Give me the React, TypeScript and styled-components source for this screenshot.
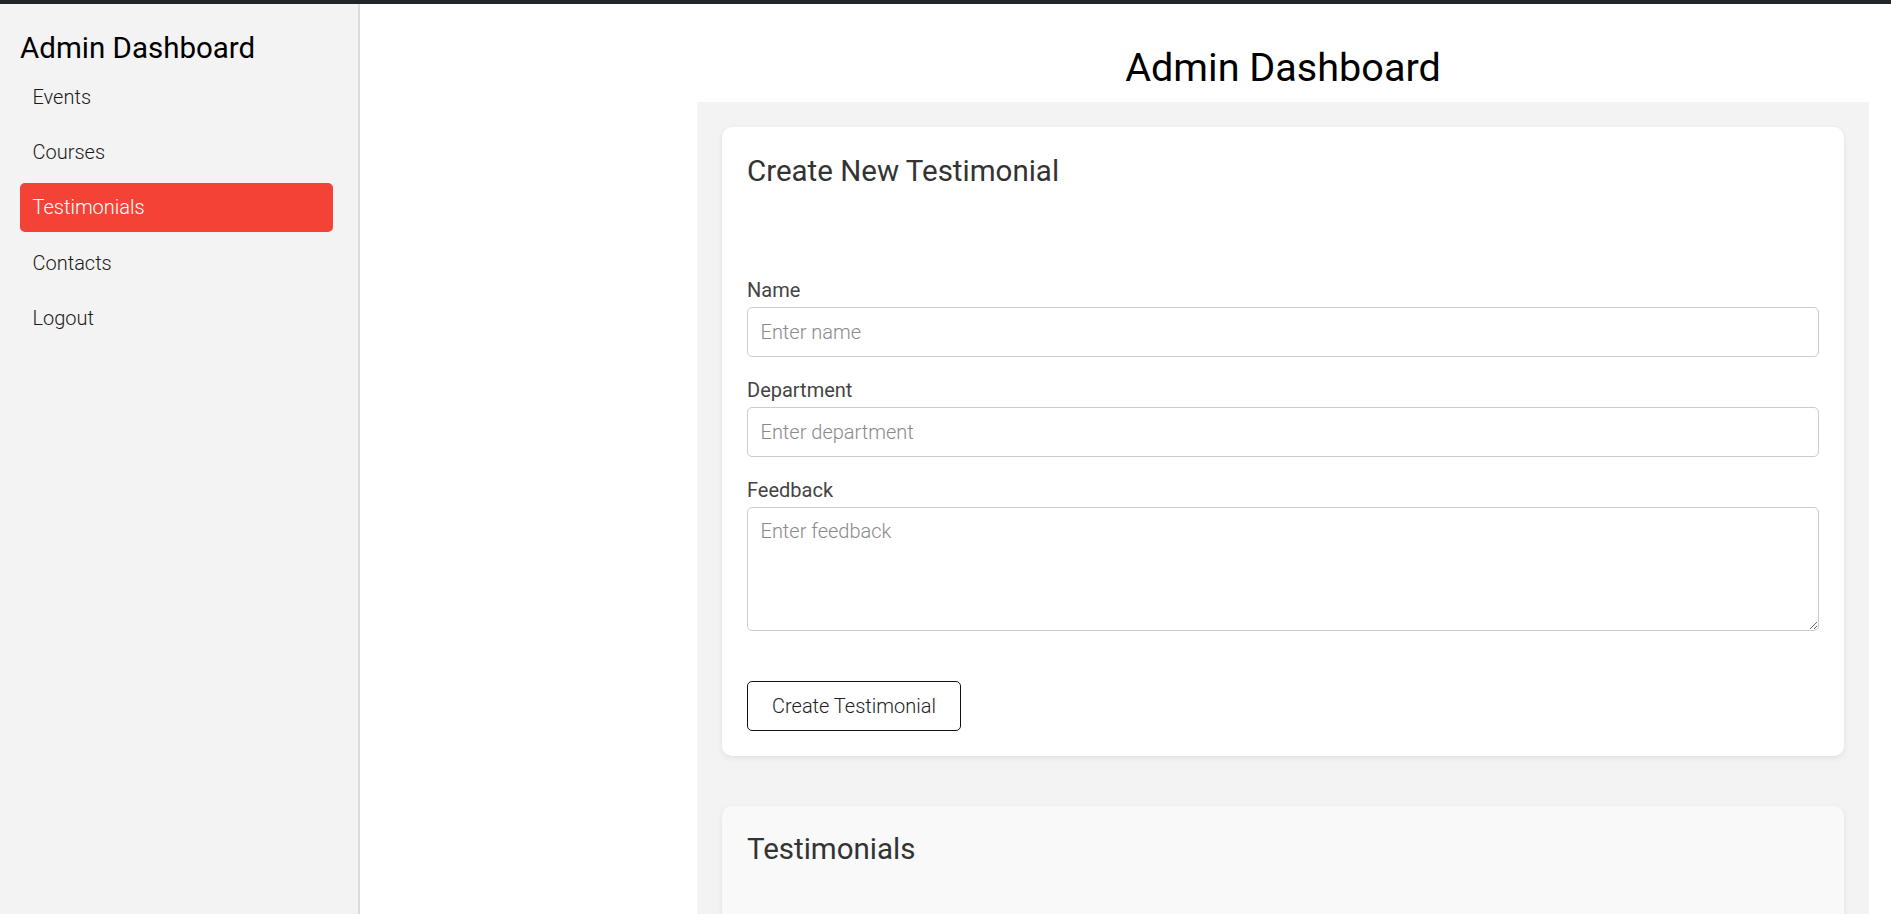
import React from "react";
import styled, { createGlobalStyle } from "styled-components";

const GlobalStyle = createGlobalStyle`
  html, body {
    margin: 0;
    padding: 0;
    overflow: hidden;
    background: #ffffff;
    font-family: Roboto, "Liberation Sans", Arial, sans-serif;
  }
  * { box-sizing: border-box; }
`;

const TopBar = styled.div`
  height: 4px;
  background: #212529;
`;

const Layout = styled.div`
  display: flex;
  height: calc(100vh - 4px);
`;

const Sidebar = styled.aside`
  width: 360px;
  flex-shrink: 0;
  background: #f3f3f3;
  border-right: 2px solid #dcdcdc;
  padding: 26.5px 25px 0 20px;
  display: flex;
  flex-direction: column;
`;

const SideTitle = styled.h2`
  margin: 0 0 6.5px;
  font-size: 29.5px;
  font-weight: 400;
  line-height: 35.2px;
  color: #000;
`;

const Nav = styled.nav`
  display: flex;
  flex-direction: column;
  gap: 6.3px;
`;

const NavItem = styled.a<{ $active?: boolean }>`
  display: flex;
  align-items: center;
  height: 49px;
  padding: 0 12.5px;
  border-radius: 5px;
  font-size: 20px;
  font-weight: 300;
  color: ${(p) => (p.$active ? "#ffffff" : "#1a1a1a")};
  background: ${(p) => (p.$active ? "#f44336" : "transparent")};
  text-decoration: none;
  cursor: pointer;
`;

const Main = styled.main`
  flex: 1;
  padding: 0 22px 0 337px;
  display: flex;
  flex-direction: column;
  min-width: 0;
`;

const PageTitle = styled.h1`
  margin: 40px 0 11px;
  font-size: 39.6px;
  font-weight: 400;
  line-height: 47px;
  text-align: center;
  color: #000;
`;

const Panel = styled.section`
  flex: 1;
  background: #f3f3f3;
  padding: 25px;
  display: flex;
  flex-direction: column;
  gap: 50px;
`;

const Card = styled.div<{ $muted?: boolean }>`
  background: ${(p) => (p.$muted ? "#f9f9f9" : "#ffffff")};
  border-radius: 10px;
  padding: 25px;
  box-shadow: 0 2px 6px rgba(0, 0, 0, 0.08);
  flex-shrink: 0;
  min-height: ${(p) => (p.$muted ? "300px" : "auto")};
`;

const CardTitle = styled.h2<{ $gap: number }>`
  margin: 0 0 ${(p) => p.$gap}px;
  padding-top: 1.5px;
  font-size: 29.5px;
  font-weight: 400;
  line-height: 35.2px;
  color: #333;
`;

const Field = styled.div`
  margin-bottom: 20px;
`;

const Label = styled.label`
  display: block;
  padding-top: 2px;
  margin-bottom: 4.25px;
  font-size: 20px;
  font-weight: 400;
  line-height: 23.4px;
  color: #444;
`;

const Input = styled.input`
  display: block;
  width: 100%;
  height: 50.4px;
  padding: 12.5px;
  border: 1px solid #cccccc;
  border-radius: 5px;
  font-family: inherit;
  font-size: 20px;
  font-weight: 300;
  color: #222;
  background: #fff;
  outline: none;
  &::placeholder {
    color: #8a8a8a;
  }
`;

const TextArea = styled.textarea`
  display: block;
  width: 100%;
  height: 124.4px;
  padding: 12.5px;
  border: 1px solid #cccccc;
  border-radius: 5px;
  font-family: inherit;
  font-size: 20px;
  font-weight: 300;
  line-height: 23.4px;
  color: #222;
  background: #fff;
  resize: vertical;
  outline: none;
  &::placeholder {
    color: #8a8a8a;
  }
`;

const Button = styled.button`
  margin-top: 29.6px;
  height: 50px;
  padding: 0 24px;
  border: 1.5px solid #111;
  border-radius: 5px;
  background: #fff;
  font-family: inherit;
  font-size: 20px;
  font-weight: 300;
  color: #222;
  cursor: pointer;
`;

const navItems = ["Events", "Courses", "Testimonials", "Contacts", "Logout"];

export default function App() {
  return (
    <>
      <GlobalStyle />
      <TopBar />
      <Layout>
        <Sidebar>
          <SideTitle>Admin Dashboard</SideTitle>
          <Nav>
            {navItems.map((item) => (
              <NavItem key={item} $active={item === "Testimonials"}>
                {item}
              </NavItem>
            ))}
          </Nav>
        </Sidebar>
        <Main>
          <PageTitle>Admin Dashboard</PageTitle>
          <Panel>
            <Card>
              <CardTitle $gap={88.5}>Create New Testimonial</CardTitle>
              <Field>
                <Label>Name</Label>
                <Input placeholder="Enter name" />
              </Field>
              <Field>
                <Label>Department</Label>
                <Input placeholder="Enter department" />
              </Field>
              <Field>
                <Label>Feedback</Label>
                <TextArea placeholder="Enter feedback" />
              </Field>
              <Button>Create Testimonial</Button>
            </Card>
            <Card $muted>
              <CardTitle $gap={25}>Testimonials</CardTitle>
            </Card>
          </Panel>
        </Main>
      </Layout>
    </>
  );
}
